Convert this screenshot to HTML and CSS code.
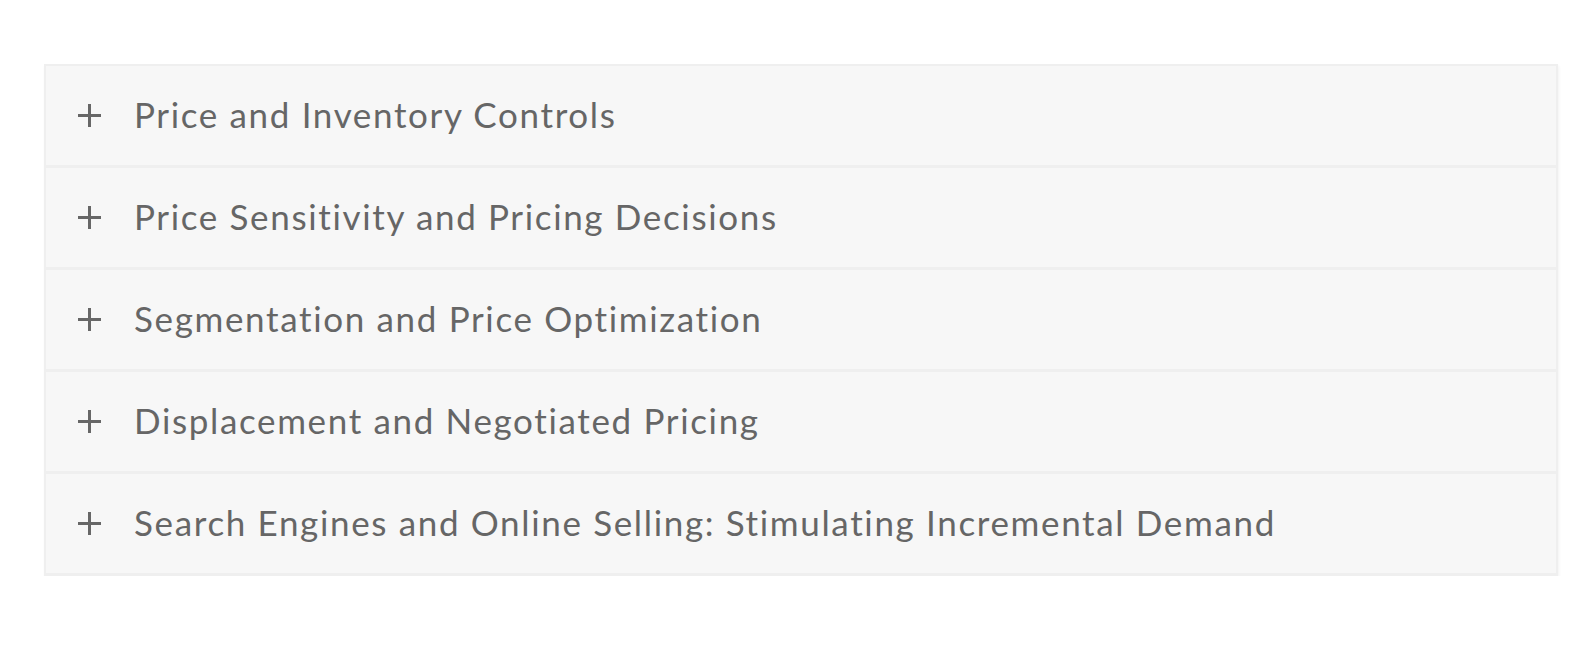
FILE: index.html
```html
<!DOCTYPE html>
<html>
<head>
<meta charset="utf-8">
<link rel="stylesheet" href="styles.css">
</head>
<body>
<div class="accordion">
  <div class="item"><span class="plus"></span><span class="title">Price and Inventory Controls</span></div>
  <div class="item"><span class="plus"></span><span class="title">Price Sensitivity and Pricing Decisions</span></div>
  <div class="item"><span class="plus"></span><span class="title">Segmentation and Price Optimization</span></div>
  <div class="item"><span class="plus"></span><span class="title">Displacement and Negotiated Pricing</span></div>
  <div class="item"><span class="plus"></span><span class="title">Search Engines and Online Selling: Stimulating Incremental Demand</span></div>
</div>
</body>
</html>
```
FILE: styles.css
```css
html, body { margin: 0; padding: 0; background: #ffffff; }
body { font-family: Lato, "Open Sans", sans-serif; }
.accordion {
  margin: 64px 36px 0 44px;
  border-top: 2px solid #efefef;
  box-shadow: 1px 2px 3px rgba(0,0,0,0.05);
}
.item {
  display: flex;
  align-items: center;
  height: 99px;
  background: #f7f7f7;
  border-left: 2px solid #efefef;
  border-right: 2px solid #efefef;
  border-bottom: 3px solid #efefef;
}
.plus {
  position: relative;
  width: 23px;
  height: 23px;
  margin-left: 32px;
  flex: none;
}
.plus::before, .plus::after {
  content: "";
  position: absolute;
  background: #676767;
}
.plus::before { left: 0; right: 0; top: 10px; height: 3px; }
.plus::after { top: 0; bottom: 0; left: 10px; width: 3px; }
.title {
  margin-left: 33px;
  padding-bottom: 4px;
  font-size: 35px;
  color: #666666;
  letter-spacing: 1.65px;
}
```
